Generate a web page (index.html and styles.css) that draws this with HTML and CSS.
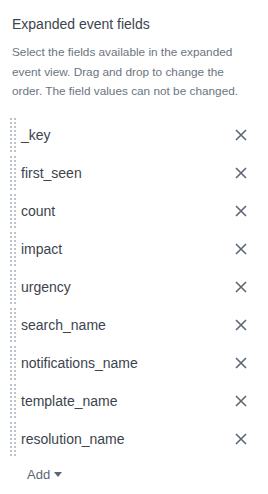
FILE: index.html
```html
<!DOCTYPE html>
<html lang="en">
<head>
    <meta charset="UTF-8">
    <meta name="viewport" content="width=device-width, initial-scale=1.0">
    <title>Expanded event fields</title>
    <link rel="stylesheet" href="styles.css">
</head>
<body>

<div class="panel">
    <div class="panel-title">Expanded event fields</div>
    <p class="panel-help">Select the fields available in the expanded event view. Drag and drop to change the order. The field values can not be changed.</p>

    <!-- Sortable field list -->
    <ul class="field-list">
        <li class="field-row"><span class="grip"></span><span class="field-name">_key</span><button class="remove-btn" aria-label="Remove"><svg viewBox="0 0 12 12"><path d="M1 1L11 11M11 1L1 11"/></svg></button></li>
        <li class="field-row"><span class="grip"></span><span class="field-name">first_seen</span><button class="remove-btn" aria-label="Remove"><svg viewBox="0 0 12 12"><path d="M1 1L11 11M11 1L1 11"/></svg></button></li>
        <li class="field-row"><span class="grip"></span><span class="field-name">count</span><button class="remove-btn" aria-label="Remove"><svg viewBox="0 0 12 12"><path d="M1 1L11 11M11 1L1 11"/></svg></button></li>
        <li class="field-row"><span class="grip"></span><span class="field-name">impact</span><button class="remove-btn" aria-label="Remove"><svg viewBox="0 0 12 12"><path d="M1 1L11 11M11 1L1 11"/></svg></button></li>
        <li class="field-row"><span class="grip"></span><span class="field-name">urgency</span><button class="remove-btn" aria-label="Remove"><svg viewBox="0 0 12 12"><path d="M1 1L11 11M11 1L1 11"/></svg></button></li>
        <li class="field-row"><span class="grip"></span><span class="field-name">search_name</span><button class="remove-btn" aria-label="Remove"><svg viewBox="0 0 12 12"><path d="M1 1L11 11M11 1L1 11"/></svg></button></li>
        <li class="field-row"><span class="grip"></span><span class="field-name">notifications_name</span><button class="remove-btn" aria-label="Remove"><svg viewBox="0 0 12 12"><path d="M1 1L11 11M11 1L1 11"/></svg></button></li>
        <li class="field-row"><span class="grip"></span><span class="field-name">template_name</span><button class="remove-btn" aria-label="Remove"><svg viewBox="0 0 12 12"><path d="M1 1L11 11M11 1L1 11"/></svg></button></li>
        <li class="field-row"><span class="grip"></span><span class="field-name">resolution_name</span><button class="remove-btn" aria-label="Remove"><svg viewBox="0 0 12 12"><path d="M1 1L11 11M11 1L1 11"/></svg></button></li>
    </ul>

    <button class="add-btn">Add <svg class="caret" viewBox="0 0 8 5"><path d="M0 0H8L4 5Z"/></svg></button>
</div>

</body>
</html>
```

FILE: styles.css
```css
/* Basic page styling */
body {
    font-family: "Liberation Sans", Arial, sans-serif;
    margin: 0;
    padding: 0;
    background-color: #fff;
}

.panel {
    padding: 14px 21px 0 12px;
}

.panel-title {
    font-size: 14px;
    line-height: 20px;
    color: #3c444d;
}

.panel-help {
    margin: 9px 0 0 0;
    font-size: 11.8px;
    line-height: 19.5px;
    color: #6b7480;
}

/* Field list */
.field-list {
    list-style: none;
    margin: 16px 0 0 -2px;
    padding: 0;
}

.field-row {
    display: flex;
    align-items: center;
    height: 34px;
    margin-bottom: 4px;
}

/* drag handle: two columns of small square dots */
.grip {
    width: 6px;
    height: 34px;
    flex-shrink: 0;
    background-image: conic-gradient(#bcc3cb 0 25%, transparent 0);
    background-size: 4px 4px;
    background-position: -2px 0;
}

.field-name {
    flex: 1;
    margin-left: 5px;
    font-size: 14px;
    color: #3c444d;
}

.remove-btn {
    border: none;
    background: none;
    padding: 0;
    width: 12px;
    height: 12px;
    cursor: pointer;
}

.remove-btn svg {
    display: block;
    width: 12px;
    height: 12px;
    stroke: #5c6773;
    stroke-width: 1.6;
    fill: none;
}

/* Add dropdown */
.add-btn {
    display: flex;
    align-items: center;
    gap: 4px;
    margin: 9px 0 0 15px;
    padding: 0;
    border: none;
    background: none;
    font-family: inherit;
    font-size: 13px;
    line-height: 20px;
    color: #5c6773;
    cursor: pointer;
}

.caret {
    width: 8px;
    height: 5px;
    fill: #5c6773;
}
```
